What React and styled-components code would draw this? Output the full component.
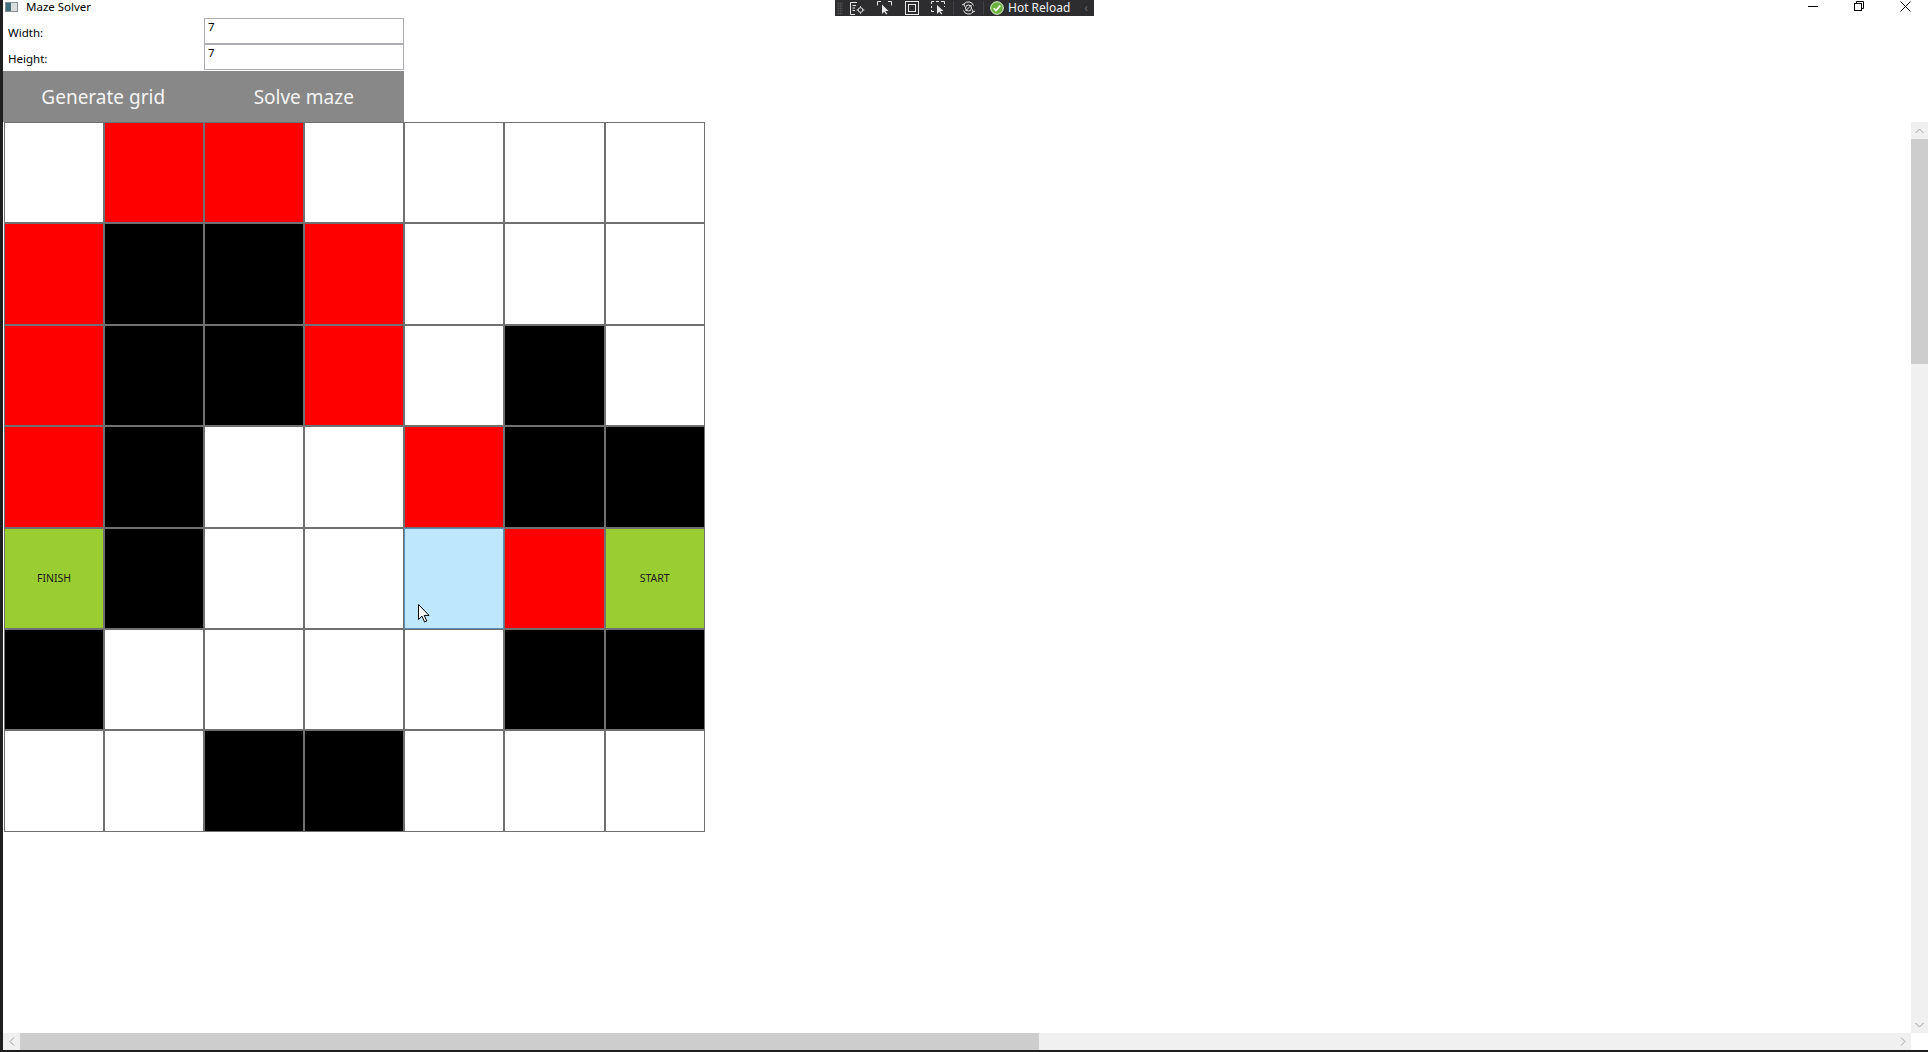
import React from "react";
import styled, { createGlobalStyle } from "styled-components";

const GlobalStyle = createGlobalStyle`
  html, body { margin: 0; padding: 0; overflow: hidden; background: #1f1f1f; }
  body { font-family: "Noto Sans", "Open Sans", "Liberation Sans", sans-serif; }
  * { box-sizing: border-box; }
`;

const Screen = styled.div`
  position: relative;
  width: 1928px;
  height: 1052px;
  background: #1f1f1f;
  display: flex;
  flex-direction: column;
  padding-left: 3px;
  padding-bottom: 2px;
`;

const Window = styled.div`
  flex: 1;
  background: #ffffff;
  display: flex;
  flex-direction: column;
  min-height: 0;
`;

const TitleBar = styled.div`
  height: 18px;
  display: flex;
  align-items: flex-start;
  font-size: 11.5px;
  color: #000;
`;

const AppIcon = styled.div`
  width: 13px;
  height: 10px;
  margin: 2px 0 0 2px;
  border: 1px solid #8a8f94;
  background: linear-gradient(90deg, #3f6f78 0 45%, #d8dde0 45% 100%);
`;

const TitleText = styled.span`
  margin-left: 8px;
  line-height: 13px;
`;

const Controls = styled.div`
  margin-left: auto;
  display: flex;
`;

const ControlBtn = styled.div`
  width: 46px;
  height: 12px;
  display: flex;
  align-items: center;
  justify-content: center;
`;

const FormGrid = styled.div`
  display: grid;
  grid-template-columns: 201px 200px;
  grid-template-rows: 26px 26px;
`;

const FieldLabel = styled.div`
  font-size: 11.5px;
  padding-left: 5px;
  display: flex;
  align-items: center;
  padding-top: 2px;
  color: #000;
`;

const TextBox = styled.div`
  border: 1px solid #abadb3;
  font-size: 11.5px;
  padding: 1px 0 0 3px;
  line-height: 13px;
  color: #000;
  background: #fff;
`;

const ButtonBar = styled.div`
  margin-top: 1px;
  width: 401px;
  height: 51px;
  display: flex;
  background: #888888;
`;

const BarButton = styled.div`
  flex: 1;
  display: flex;
  align-items: center;
  justify-content: center;
  color: #f4f4f4;
  font-size: 19px;
  padding-top: 1px;
`;

const ScrollArea = styled.div`
  flex: 1;
  display: flex;
  min-height: 0;
`;

const Content = styled.div`
  flex: 1;
  padding-left: 1px;
`;

const MazeGrid = styled.div`
  position: relative;
  display: grid;
  grid-template-columns: repeat(7, 100.1px);
  grid-template-rows: repeat(7, 101.4px);
  width: 701px;
`;

const colors = {
  W: "#ffffff",
  R: "#ff0000",
  B: "#000000",
  G: "#9acd32",
  L: "#bee6fd",
};

const Cell = styled.div`
  background: ${(p) => colors[p.$kind]};
  border: 1px solid ${(p) => (p.$kind === "L" ? "#5a8db5" : "#707070")};
  display: flex;
  align-items: center;
  justify-content: center;
  font-size: 10.5px;
  color: #1a1a1a;
`;

const Cursor = styled.svg`
  position: absolute;
  left: 414px;
  top: 482px;
`;

const VScroll = styled.div`
  width: 17px;
  background: #f0f0f0;
  display: flex;
  flex-direction: column;
`;

const ArrowBox = styled.div`
  width: 17px;
  height: 17px;
  display: flex;
  align-items: center;
  justify-content: center;
  flex: none;
`;

const VThumb = styled.div`
  height: 225px;
  background: #cdcdcd;
`;

const Spacer = styled.div`
  flex: 1;
`;

const HScrollRow = styled.div`
  height: 17px;
  display: flex;
`;

const HScroll = styled.div`
  flex: 1;
  background: #f0f0f0;
  display: flex;
`;

const HThumb = styled.div`
  width: 1019px;
  background: #cdcdcd;
`;

const Corner = styled.div`
  width: 17px;
  background: #ffffff;
`;

const DevBar = styled.div`
  position: absolute;
  left: 835px;
  top: 0;
  width: 259px;
  height: 16px;
  background: #2d2d30;
  display: flex;
  align-items: center;
  color: #f1f1f1;
  padding-left: 2px;
`;

const Grip = styled.div`
  width: 6px;
  height: 13px;
  margin-right: 1px;
  background-image: radial-gradient(#555 0.8px, transparent 0.9px);
  background-size: 2.5px 2.5px;
`;

const DevIcon = styled.div`
  width: 27px;
  height: 16px;
  display: flex;
  align-items: center;
  justify-content: center;
  flex: none;
`;

const Sep = styled.div`
  width: 1px;
  height: 14px;
  background: #3f3f46;
  margin: 0 ${(p) => p.$gap || 1}px 0 1px;
`;

const ReloadText = styled.span`
  margin-left: 4px;
  font-size: 12px;
  line-height: 16px;
  color: #f1f1f1;
`;

const Chevron = styled.span`
  margin-left: 14px;
  color: #666;
  font-size: 12px;
  line-height: 16px;
`;

const maze = [
  "WRRWWWW",
  "RBBRWWW",
  "RBBRWBW",
  "RBWWRBB",
  "GBWWLRG",
  "BWWWWBB",
  "WWBBWWW",
];

const labelFor = (r, c) => {
  if (r === 4 && c === 0) return "FINISH";
  if (r === 4 && c === 6) return "START";
  return null;
};

const stroke = { stroke: "#e8e8e8", strokeWidth: 1, fill: "none" };

export default function App() {
  return (
    <>
      <GlobalStyle />
      <Screen>
        <Window>
          <TitleBar>
            <AppIcon />
            <TitleText>Maze Solver</TitleText>
            <Controls>
              <ControlBtn>
                <svg width="10" height="10" viewBox="0 0 10 10">
                  <line x1="0" y1="5.5" x2="10" y2="5.5" stroke="#000" strokeWidth="1" />
                </svg>
              </ControlBtn>
              <ControlBtn>
                <svg width="10" height="10" viewBox="0 0 10 10">
                  <rect x="0.5" y="2.5" width="7" height="7" fill="none" stroke="#000" />
                  <path d="M2.5 2.5V0.5H9.5V7.5H7.5" fill="none" stroke="#000" />
                </svg>
              </ControlBtn>
              <ControlBtn>
                <svg width="11" height="11" viewBox="0 0 11 11">
                  <path d="M0.5 0.5L10.5 10.5M10.5 0.5L0.5 10.5" stroke="#000" strokeWidth="1" />
                </svg>
              </ControlBtn>
            </Controls>
          </TitleBar>

          <FormGrid>
            <FieldLabel>Width:</FieldLabel>
            <TextBox>7</TextBox>
            <FieldLabel>Height:</FieldLabel>
            <TextBox>7</TextBox>
          </FormGrid>

          <ButtonBar>
            <BarButton>Generate grid</BarButton>
            <BarButton>Solve maze</BarButton>
          </ButtonBar>

          <ScrollArea>
            <Content>
              <MazeGrid>
                {maze.map((row, r) =>
                  row.split("").map((k, c) => (
                    <Cell key={`${r}-${c}`} $kind={k}>
                      {labelFor(r, c)}
                    </Cell>
                  ))
                )}
                <Cursor width="12" height="19" viewBox="0 0 12 19">
                  <path
                    d="M0.5 0.5V15.5L4 12.2L6.6 18L8.8 17L6.2 11.4H11Z"
                    fill="#fff"
                    stroke="#000"
                    strokeWidth="1"
                    strokeLinejoin="round"
                  />
                </Cursor>
              </MazeGrid>
            </Content>
            <VScroll>
              <ArrowBox>
                <svg width="9" height="6" viewBox="0 0 9 6">
                  <path d="M0.5 5L4.5 1L8.5 5" fill="none" stroke="#a0a0a0" strokeWidth="1" />
                </svg>
              </ArrowBox>
              <VThumb />
              <Spacer />
              <ArrowBox>
                <svg width="9" height="6" viewBox="0 0 9 6">
                  <path d="M0.5 1L4.5 5L8.5 1" fill="none" stroke="#a0a0a0" strokeWidth="1" />
                </svg>
              </ArrowBox>
            </VScroll>
          </ScrollArea>

          <HScrollRow>
            <HScroll>
              <ArrowBox>
                <svg width="6" height="9" viewBox="0 0 6 9">
                  <path d="M5 0.5L1 4.5L5 8.5" fill="none" stroke="#a0a0a0" strokeWidth="1" />
                </svg>
              </ArrowBox>
              <HThumb />
              <Spacer />
              <ArrowBox>
                <svg width="6" height="9" viewBox="0 0 6 9">
                  <path d="M1 0.5L5 4.5L1 8.5" fill="none" stroke="#a0a0a0" strokeWidth="1" />
                </svg>
              </ArrowBox>
            </HScroll>
            <Corner />
          </HScrollRow>
        </Window>

        <DevBar>
          <Grip />
          <DevIcon>
            <svg width="15" height="13" viewBox="0 0 15 13">
              <path d="M0.5 0.5H7M0.5 0.5V12.5H5M2.5 3.5H6M2.5 6H5M2.5 8.5H5" {...stroke} />
              <circle cx="10.5" cy="8" r="2.3" {...stroke} />
              <path d="M10.5 4.2V5.5M10.5 10.5V11.8M6.7 8H8M13 8H14.3" {...stroke} />
            </svg>
          </DevIcon>
          <DevIcon>
            <svg width="15" height="14" viewBox="0 0 15 14">
              <path d="M0.5 4.5V0.5H4M11 0.5H14.5V4.5" {...stroke} />
              <path d="M5 3.5V13L7.2 10.8L9.2 13.5L10.3 12.8L8.3 10H11.5Z" fill="#e8e8e8" />
            </svg>
          </DevIcon>
          <DevIcon>
            <svg width="14" height="14" viewBox="0 0 14 14">
              <rect x="0.5" y="0.5" width="13" height="13" {...stroke} />
              <rect x="3.5" y="3.5" width="7" height="7" {...stroke} />
            </svg>
          </DevIcon>
          <DevIcon>
            <svg width="16" height="14" viewBox="0 0 16 14">
              <path d="M0.5 3V0.5H3M5 0.5H8M10 0.5H13.5V3M0.5 5V7M0.5 9V10.5H3M13.5 5V6" {...stroke} />
              <path d="M6 4V13L8.2 10.8L10.2 13.5L11.3 12.8L9.3 10H12.5Z" fill="#e8e8e8" />
            </svg>
          </DevIcon>
          <Sep />
          <DevIcon>
            <svg width="15" height="14" viewBox="0 0 15 14">
              <path d="M3 3A5.5 5.5 0 0 1 12.5 4.5M12 11A5.5 5.5 0 0 1 2.5 9.5" {...stroke} />
              <path d="M1 4L3 3L3.5 5.5M14 10L12 11L11.5 8.5" {...stroke} />
              <path d="M4.5 10L10.5 4" {...stroke} />
              <circle cx="7.5" cy="7" r="3" {...stroke} />
            </svg>
          </DevIcon>
          <Sep $gap={6} />
          <svg width="14" height="14" viewBox="0 0 14 14">
            <circle cx="7" cy="7" r="6.3" fill="#6cb33e" stroke="#e8f5dc" strokeWidth="1" />
            <path d="M3.8 7.2L6 9.6L10.3 4.5" fill="none" stroke="#ffffff" strokeWidth="1.6" />
          </svg>
          <ReloadText>Hot Reload</ReloadText>
          <Chevron>‹</Chevron>
        </DevBar>
      </Screen>
    </>
  );
}
